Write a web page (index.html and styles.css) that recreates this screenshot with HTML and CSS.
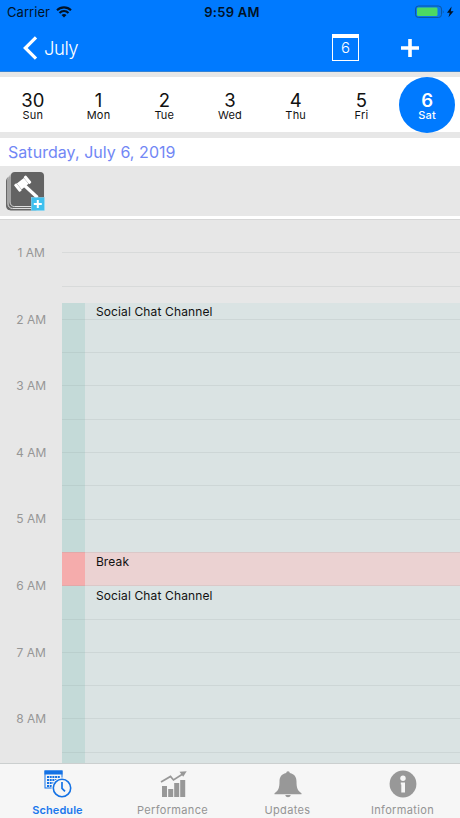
FILE: index.html
```html
<!DOCTYPE html>
<html lang="en">
<head>
<meta charset="utf-8">
<meta name="viewport" content="width=device-width">
<title>Schedule</title>
<link rel="stylesheet" href="styles.css">
</head>
<body>
<div class="app">
  <header class="header">
    <div class="status">
      <div class="carrier"><span class="carrier-name">Carrier</span>
        <svg width="16" height="12" viewBox="0 0 16 12" fill="none" stroke="#001226" stroke-width="2.1"><path d="M1 4.2a10 10 0 0 1 14 0M3.5 6.9a6.4 6.4 0 0 1 9 0"/><path d="M5.5 9.1a3.6 3.6 0 0 1 5 0L8 11.5z" fill="#001226" stroke="none"/></svg>
      </div>
      <time class="clock">9:59 AM</time>
      <div class="power">
        <svg width="40" height="14" viewBox="0 0 40 14"><rect x=".5" y="1" width="26" height="11.5" rx="3" fill="#0878ee" stroke="#0b57a6"/><rect x="2" y="2.5" width="20.5" height="8.5" rx="1.3" fill="#4cd964"/><path d="M27.8 4.7q1.7 2 0 4z" fill="#0b57a6"/><path d="M36.6 1.5 32 7.8h2.7l-1.2 4.5L38.6 6.2h-2.8z" fill="#001226"/></svg>
      </div>
    </div>
    <nav class="navbar">
      <a class="back"><svg width="15" height="24" viewBox="0 0 15 24" fill="none" stroke="#fff" stroke-width="3.2"><path d="M13 1.3 2.3 12 13 22.7"/></svg><span class="back-label">July</span></a>
      <div class="today">6</div>
      <svg class="add" width="18" height="18" viewBox="0 0 18 18" stroke="#fff" stroke-width="3.6"><path d="M9 0v18M0 9h18"/></svg>
    </nav>
  </header>
  <div class="week">
    <div class="day"><b class="num">30</b><span class="name">Sun</span></div>
    <div class="day"><b class="num">1</b><span class="name">Mon</span></div>
    <div class="day"><b class="num">2</b><span class="name">Tue</span></div>
    <div class="day"><b class="num">3</b><span class="name">Wed</span></div>
    <div class="day"><b class="num">4</b><span class="name">Thu</span></div>
    <div class="day"><b class="num">5</b><span class="name">Fri</span></div>
    <div class="day selected"><b class="num">6</b><span class="name">Sat</span></div>
  </div>
  <div class="date"><span class="date-text">Saturday, July 6, 2019</span></div>
  <div class="tools">
    <svg width="39" height="39" viewBox="0 0 39 39">
      <rect x=".5" y="5" width="33" height="33" rx="4" fill="#686868" stroke="#686868"/>
      <rect x="2" y="2.5" width="34" height="34" rx="4.5" fill="#686868" stroke="#dedede"/>
      <rect x="4" y=".5" width="34" height="34" rx="4.5" fill="#686868" stroke="#dedede"/>
      <rect x="5" y="0" width="33" height="34" rx="4" fill="#636363"/>
      <g transform="translate(16.7 11.7) rotate(-39)" fill="#fff"><rect x="-4.5" y="-3.8" width="9" height="7.6"/><rect x="-7.8" y="-4.6" width="3.2" height="9.2" rx="1"/><rect x="4.6" y="-4.6" width="3.2" height="9.2" rx="1"/></g>
      <path d="m18.5 13.5 13 12" stroke="#fff" stroke-width="3.2"/>
      <rect x="25.3" y="25.5" width="13" height="13" fill="#3fc0ee" stroke="#8cd8f3" stroke-width=".6"/><path d="M31.8 28v8M27.8 32h8" stroke="#fff" stroke-width="2"/>
    </svg>
  </div>
  <main class="timeline">
    <div class="hours">
      <span class="hour">1 AM</span><span class="hour">2 AM</span><span class="hour">3 AM</span><span class="hour">4 AM</span><span class="hour">5 AM</span><span class="hour">6 AM</span><span class="hour">7 AM</span><span class="hour">8 AM</span>
    </div>
    <div class="events">
      <div class="event chat first"><span class="event-name">Social Chat Channel</span></div>
      <div class="event break"><span class="event-name">Break</span></div>
      <div class="event chat last"><span class="event-name">Social Chat Channel</span></div>
    </div>
    <div class="lines">
      <i class="line"></i><i class="line"></i><i class="line"></i><i class="line"></i><i class="line"></i><i class="line"></i><i class="line"></i><i class="line"></i><i class="line"></i><i class="line"></i><i class="line"></i><i class="line"></i><i class="line"></i><i class="line"></i><i class="line"></i><i class="line"></i>
    </div>
  </main>
  <footer class="tabs">
    <a class="tab active">
      <svg width="28" height="28" viewBox="0 0 28 28" fill="none" stroke="#1472e5"><rect x="1" y="1" width="17" height="17"/><path d="M.5 2.5h18" stroke-width="4"/><path d="M3 7h13M3 10h13M3 13h13M3 16h10" stroke-width="2" stroke-dasharray="2 .7"/><circle cx="18" cy="18" r="10" fill="#f6f6f6" stroke="#f6f6f6"/><circle cx="18" cy="18" r="8.7" stroke-width="1.6"/><path d="M18 12v6.3l3 3" stroke-width="1.7"/></svg>
      <span class="tab-name">Schedule</span>
    </a>
    <a class="tab">
      <svg width="28" height="28" viewBox="0 0 28 28" fill="#989898"><path d="M3 16h5v11H3zM9.2 19h5v8h-5zM15.2 13h5v14h-5zM21.2 10h5v17h-5z"/><path d="m2 12 9.5-5.6 3 3.6L24.5 3.5" fill="none" stroke="#989898" stroke-width="1.7"/><path d="m20.5 1.7 7.2-.5-3.5 5.6z"/></svg>
      <span class="tab-name">Performance</span>
    </a>
    <a class="tab">
      <svg width="28" height="28" viewBox="0 0 28 28" fill="#989898"><path d="M12.2 3a1.8 1.8 0 1 1 3.6 0c4.9 1 6.7 4.3 6.7 8.5 0 6.6 1.2 9.2 5 11.7v1H.5v-1c3.8-2.5 5-5.1 5-11.7 0-4.2 1.8-7.5 6.7-8.5zM11.3 25.1h5.4c-.5 3-4.9 3-5.4 0z"/></svg>
      <span class="tab-name">Updates</span>
    </a>
    <a class="tab">
      <svg width="28" height="28" viewBox="0 0 28 28"><circle cx="14" cy="14" r="13.4" fill="#989898"/><circle cx="14" cy="8.3" r="2.7" fill="#f6f6f6"/><path d="M11.8 12.4H16v10.2h-3.7v-8.2h-.5z" fill="#f6f6f6"/></svg>
      <span class="tab-name">Information</span>
    </a>
  </footer>
</div>
</body>
</html>
```

FILE: styles.css
```css
* { box-sizing: border-box; }
body { margin: 0; font-family: Inter, "Liberation Sans", sans-serif; }
.app { width: 460px; height: 818px; display: flex; flex-direction: column; overflow: hidden; background: #e7e7e7; }
.header { height: 72px; flex: none; background: #007aff; border-bottom: 1px solid #3383d6; }
.status { height: 24px; display: grid; grid-template-columns: 1fr 1fr 1fr; align-items: center; color: #001226; font-size: 13px; line-height: 24px; }
.carrier { display: flex; align-items: center; gap: 6px; padding-left: 7px; }
.carrier-name { letter-spacing: .05px; }
.clock { text-align: center; font-weight: 600; letter-spacing: .25px; padding-left: 4px; }
.power { display: flex; justify-content: flex-end; padding-right: 5px; }
.navbar { height: 47px; display: flex; align-items: center; color: #fff; padding-left: 23px; }
.back { display: flex; align-items: center; gap: 6px; width: 309px; }
.back-label { font-size: 18.5px; font-weight: 300; letter-spacing: -.5px; line-height: 24px; }
.today { width: 27px; height: 27px; border: 1.5px solid #fff; border-top-width: 4px; text-align: center; font-size: 15px; font-weight: 300; line-height: 20px; }
.add { margin-left: 42px; }
.week { height: 55px; flex: none; margin: 5px 0 6px; background: #fff; display: grid; grid-template-columns: repeat(7, 1fr); }
.day { display: flex; flex-direction: column; align-items: center; padding-top: 13px; width: 55px; height: 55px; justify-self: center; color: #111; }
.num { font-size: 18.5px; line-height: 20px; font-weight: 400; }
.name { font-size: 11px; line-height: 10px; letter-spacing: .2px; }
.selected { width: 56px; height: 56px; background: #007aff; border-radius: 50%; color: #fff; }
.selected .num { font-weight: 600; }
.selected .name { font-weight: 500; }
.date { height: 28px; flex: none; background: #fff; padding-left: 8px; color: #7287f5; font-size: 16px; line-height: 29px; letter-spacing: .05px; }
.tools { height: 53px; flex: none; padding: 6px 0 0 6px; border-bottom: 3px solid #fff; }
.timeline { height: 544px; flex: none; display: grid; grid-template: 544px / 62.4px 397.6px; border-top: 1px solid #d6d6d6; overflow: hidden; }
.hours { display: flex; flex-direction: column; }
.hour { height: 66.6px; flex: none; line-height: 65px; text-align: center; font-size: 12px; color: #969696; }
.events, .lines { grid-area: 1 / 2; display: flex; flex-direction: column; }
.events { padding-top: 82.5px; }
.event { border-left: 23px solid; padding-left: 10.5px; font-size: 12px; line-height: 19px; letter-spacing: .13px; color: #111; flex: none; }
.chat { background: #dae3e3; border-color: #c4dad8; }
.break { background: #ebd2d2; border-color: #f5acac; height: 33.5px; }
.first { height: 249.5px; line-height: 18.5px; }
.last { height: 178px; }
.line { height: 33.3px; flex: none; border-bottom: 1px solid rgba(135, 150, 150, .16); }
.tabs { height: 55px; flex: none; display: grid; grid-template-columns: repeat(4, 1fr); border-top: 1px solid #cbcfcf; background: #f6f6f6; color: #949494; }
.tab { display: flex; flex-direction: column; align-items: center; padding: 6px 0 0; }
.tab-name { margin-top: 5px; font-size: 11px; line-height: 14px; font-weight: 400; letter-spacing: .35px; }
.active { color: #1b78ed; }
.active .tab-name { font-weight: 600; letter-spacing: .08px; }
```
